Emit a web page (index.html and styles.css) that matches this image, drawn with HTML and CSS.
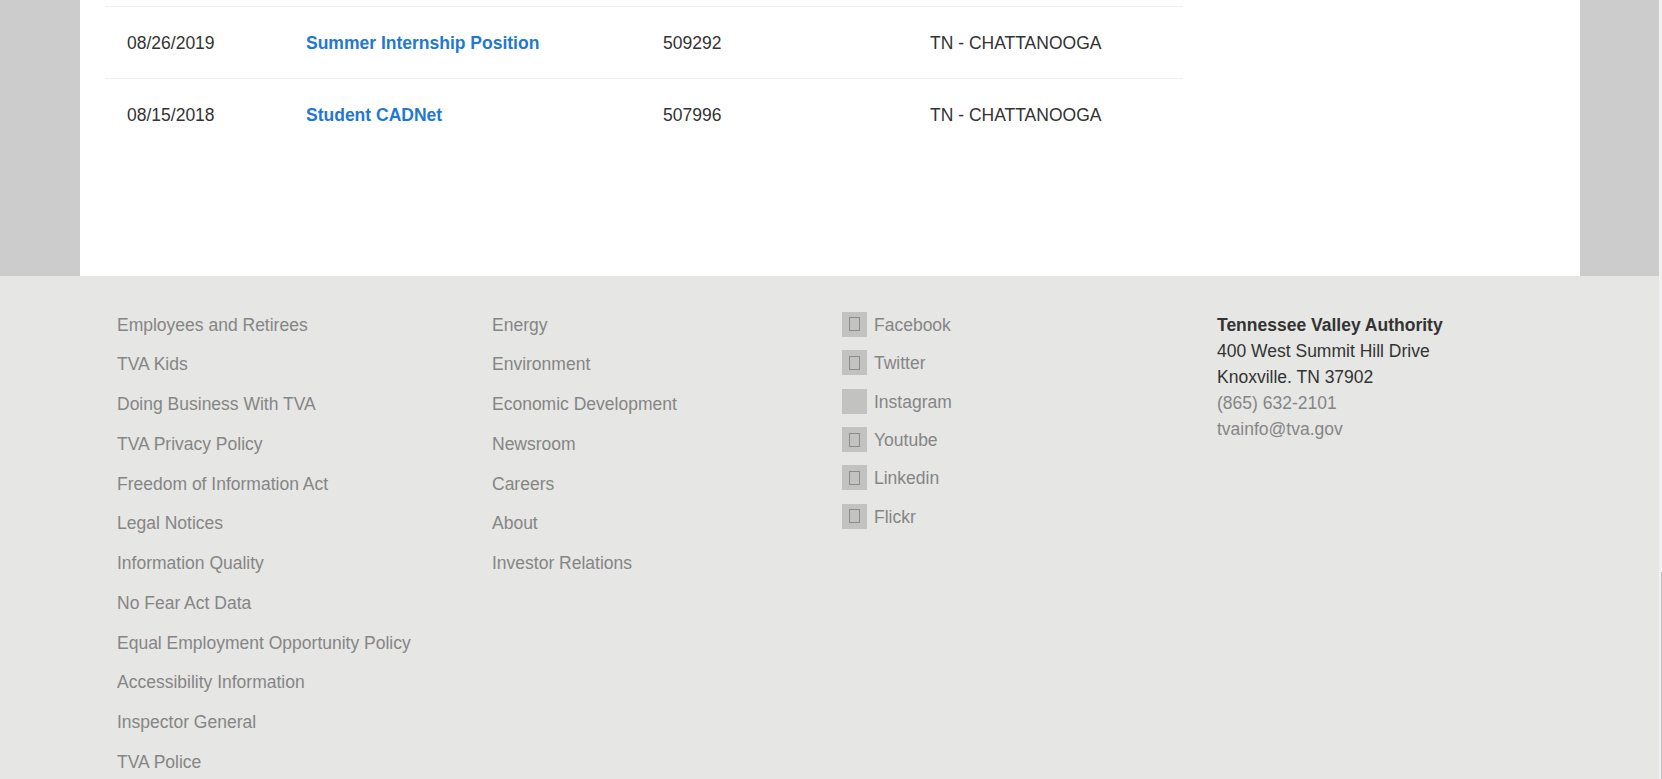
FILE: index.html
```html
<!DOCTYPE html>
<html lang="en">
<head>
    <meta charset="UTF-8">
    <title>Careers - Tennessee Valley Authority</title>
    <link rel="stylesheet" href="styles.css">
</head>
<body>
    <div class="page">
        <div class="content-wrap">
            <div class="content">
                <div class="job-row">
                    <div class="job-date">08/26/2019</div>
                    <a class="job-title" href="#">Summer Internship Position</a>
                    <div class="job-id">509292</div>
                    <div class="job-place">TN - CHATTANOOGA</div>
                </div>
                <div class="job-row">
                    <div class="job-date">08/15/2018</div>
                    <a class="job-title" href="#">Student CADNet</a>
                    <div class="job-id">507996</div>
                    <div class="job-place">TN - CHATTANOOGA</div>
                </div>
            </div>
        </div>

        <div class="footer">
            <ul class="footer-links col-one">
                <li><a href="#">Employees and Retirees</a></li>
                <li><a href="#">TVA Kids</a></li>
                <li><a href="#">Doing Business With TVA</a></li>
                <li><a href="#">TVA Privacy Policy</a></li>
                <li><a href="#">Freedom of Information Act</a></li>
                <li><a href="#">Legal Notices</a></li>
                <li><a href="#">Information Quality</a></li>
                <li><a href="#">No Fear Act Data</a></li>
                <li><a href="#">Equal Employment Opportunity Policy</a></li>
                <li><a href="#">Accessibility Information</a></li>
                <li><a href="#">Inspector General</a></li>
                <li><a href="#">TVA Police</a></li>
            </ul>

            <ul class="footer-links col-two">
                <li><a href="#">Energy</a></li>
                <li><a href="#">Environment</a></li>
                <li><a href="#">Economic Development</a></li>
                <li><a href="#">Newsroom</a></li>
                <li><a href="#">Careers</a></li>
                <li><a href="#">About</a></li>
                <li><a href="#">Investor Relations</a></li>
            </ul>

            <ul class="social-links">
                <li><span class="social-icon"><span class="tofu"></span></span><a href="#">Facebook</a></li>
                <li><span class="social-icon"><span class="tofu"></span></span><a href="#">Twitter</a></li>
                <li><span class="social-icon"></span><a href="#">Instagram</a></li>
                <li><span class="social-icon"><span class="tofu"></span></span><a href="#">Youtube</a></li>
                <li><span class="social-icon"><span class="tofu"></span></span><a href="#">Linkedin</a></li>
                <li><span class="social-icon"><span class="tofu"></span></span><a href="#">Flickr</a></li>
            </ul>

            <div class="contact">
                <strong>Tennessee Valley Authority</strong><br>
                400 West Summit Hill Drive<br>
                Knoxville. TN 37902<br>
                <a href="#">(865) 632-2101</a><br>
                <a href="#">tvainfo@tva.gov</a>
            </div>
        </div>
    </div>

    <div class="scroll-track">
        <div class="scroll-thumb"></div>
    </div>
</body>
</html>
```

FILE: styles.css
```css
* {
    margin: 0;
    padding: 0;
    box-sizing: border-box;
}

html, body {
    height: 779px;
    overflow: hidden;
}

body {
    display: flex;
    font-family: "Liberation Sans", Arial, sans-serif;
    font-size: 17.5px;
    color: #333333;
    background: #e6e6e4;
}

a {
    text-decoration: none;
}

ul {
    list-style: none;
}

.page {
    flex: 1;
    min-width: 0;
}

.content-wrap {
    height: 276px;
    padding: 0 79px 0 80px;
    background: #cccccc;
}

.content {
    height: 100%;
    padding: 6px 0 0 25px;
    background: white;
}

.job-row {
    display: grid;
    grid-template-columns: 179px 357px 267px 1fr;
    align-items: center;
    width: 1078px;
    height: 72px;
    padding: 1px 0 0 22px;
    border-top: 1px solid #eeeeee;
}

.job-title {
    font-weight: bold;
    color: #1f78d1;
}

.footer {
    display: grid;
    grid-template-columns: 375px 350px 375px 1fr;
    padding: 0 0 0 117px;
}

.footer-links {
    padding-top: 28.7px;
}

.footer-links li {
    height: 39.75px;
    line-height: 40px;
}

.footer a {
    color: #858585;
}

.social-links {
    padding-top: 29.2px;
}

.social-links li {
    display: flex;
    align-items: center;
    gap: 7px;
    height: 38.4px;
}

.social-links a {
    padding-top: 2px;
}

.social-icon {
    display: flex;
    align-items: center;
    justify-content: center;
    width: 25px;
    height: 25px;
    background: #c2c2c0;
}

.tofu {
    width: 11px;
    height: 14px;
    border: 1px solid #8c8c8c;
}

.contact {
    padding-top: 36px;
    line-height: 26px;
}

.scroll-track {
    width: 3px;
    background: #f1f1f1;
    padding-top: 572px;
}

.scroll-thumb {
    height: 207px;
    margin-left: 2px;
    background: #c1c1c1;
}
```
